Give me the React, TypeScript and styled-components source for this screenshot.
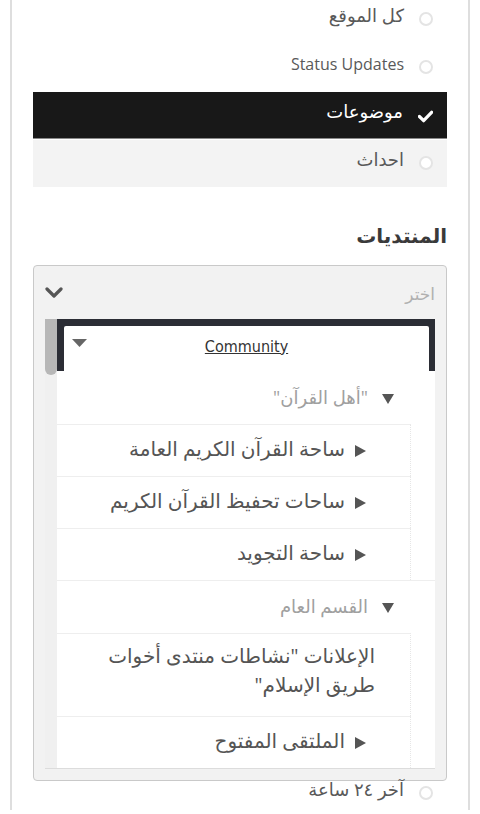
import React from 'react';
import styled, { createGlobalStyle } from 'styled-components';

const GlobalStyle = createGlobalStyle`
  html, body {
    margin: 0;
    padding: 0;
    background: #fff;
    overflow: hidden;
  }
  body {
    font-family: 'Open Sans', 'DejaVu Sans', sans-serif;
    color: #444;
  }
`;

const Page = styled.div`
  padding: 0 10px;
  height: 814px;
  overflow: hidden;
`;

const Card = styled.div`
  direction: rtl;
  width: 460px;
  box-sizing: border-box;
  border-left: 2px solid #dedede;
  border-right: 2px solid #dedede;
  padding: 0 21px;
  min-height: 814px;
`;

const OptionList = styled.ul`
  list-style: none;
  margin: -4px 0 0;
  padding: 0;
`;

const Option = styled.li<{ active?: boolean; hover?: boolean; short?: boolean }>`
  display: flex;
  align-items: center;
  gap: 15px;
  height: ${(p) => (p.short ? '32px' : '46px')};
  padding-right: 14px;
  margin-bottom: 1px;
  border-bottom: 1px solid ${(p) => (p.active ? '#8a8a8a' : 'transparent')};
  background: ${(p) => (p.active ? '#181818' : p.hover ? '#f3f3f3' : 'transparent')};
  color: ${(p) => (p.active ? '#fff' : '#595959')};
`;

const OptionText = styled.span<{ latin?: boolean }>`
  font-size: ${(p) => (p.latin ? '16px' : '18px')};
  margin-top: ${(p) => (p.latin ? '-6px' : '-8px')};
`;

const Radio = styled.span`
  width: 14px;
  height: 14px;
  box-sizing: border-box;
  border: 2px solid #e4e4e4;
  border-radius: 50%;
  background: #fff;
  flex: none;
`;

const CheckBox = styled.span`
  width: 15px;
  height: 14px;
  flex: none;
  display: flex;
  align-items: center;
  justify-content: center;
  margin-top: 2px;
`;

const Heading = styled.h3`
  margin: 34px 0 14px;
  font-size: 20px;
  line-height: 30px;
  font-weight: bold;
  color: #3a3a3a;
`;

const SelectBox = styled.div`
  border: 1px solid #c9c9c9;
  border-radius: 4px;
  background: #f2f2f2;
  padding: 0 11px 11px;
`;

const SelectHead = styled.div`
  display: flex;
  align-items: center;
  justify-content: space-between;
  height: 53px;
`;

const Placeholder = styled.span`
  color: #b0b0b0;
  font-size: 17px;
  margin-top: 2px;
`;

const Chevron = styled.span`
  display: flex;
`;

const Dropdown = styled.div`
  display: flex;
  height: 449px;
  overflow: hidden;
  border-bottom: 1px solid #dcdcdc;
`;

const Results = styled.div`
  flex: 1;
  background: #fff;
`;

const ScrollTrack = styled.div`
  width: 12px;
  background: #f0f0f0;
  flex: none;
`;

const ScrollThumb = styled.div`
  width: 12px;
  height: 56px;
  border-radius: 0 0 6px 6px;
  background: #b7b7b7;
`;

const Focused = styled.div`
  background: #2b2d35;
  padding: 7px 6px 0 7px;
`;

const FocusedInner = styled.div`
  display: flex;
  align-items: center;
  justify-content: center;
  position: relative;
  height: 45px;
  background: #fff;
  border-radius: 2px 2px 0 0;
`;

const Community = styled.a`
  direction: ltr;
  color: #333;
  font-size: 16px;
  text-decoration: underline;
  font-family: 'DejaVu Sans Condensed', 'DejaVu Sans', sans-serif;
  margin-top: -5px;
`;

const CaretDown = styled.span`
  position: absolute;
  left: 8px;
  top: 13px;
  display: flex;
`;

const GroupRow = styled.div<{ lined?: boolean }>`
  display: flex;
  align-items: center;
  gap: 14px;
  height: 52px;
  padding-right: 41px;
  border-top: 1px solid ${(p) => (p.lined ? '#eee' : 'transparent')};
  color: #a0a0a0;
  font-size: 18px;
  span {
    margin-top: -3px;
  }
`;

const Item = styled.div<{ plain?: boolean }>`
  display: flex;
  align-items: center;
  gap: 10px;
  min-height: 52px;
  box-sizing: border-box;
  margin-right: 24px;
  padding: ${(p) => (p.plain ? '11px 35px 17px 20px' : '0 44px 0 20px')};
  border-top: 1px solid #eee;
  border-right: 1px dotted #e6e6e6;
  color: #555;
  font-size: 20px;
  line-height: 29px;
  span {
    margin-top: -4px;
  }
`;

const Tri = ({ dir }: { dir: 'down' | 'left' }) =>
  dir === 'down' ? (
    <svg width="12" height="11" viewBox="0 0 12 11">
      <polygon points="0,1 12,1 6,11" fill="#555" />
    </svg>
  ) : (
    <svg width="11" height="12" viewBox="0 0 11 12">
      <polygon points="0,0 0,12 11,6" fill="#555" />
    </svg>
  );

const options = ['كل الموقع', 'Status Updates', 'موضوعات', 'احداث'];

const App = () => (
  <>
    <GlobalStyle />
    <Page>
      <Card>
        <OptionList>
          {options.map((o, i) => (
            <Option key={o} active={i === 2} hover={i === 3}>
              {i === 2 ? (
                <CheckBox>
                  <svg width="16" height="13" viewBox="0 0 16 13">
                    <path d="M1.5 6.5 L6 11 L14.5 2" stroke="#fff" strokeWidth="3.4" fill="none" strokeLinecap="round" strokeLinejoin="round" />
                  </svg>
                </CheckBox>
              ) : (
                <Radio />
              )}
              <OptionText latin={i === 1}>{o}</OptionText>
            </Option>
          ))}
        </OptionList>

        <Heading>المنتديات</Heading>

        <SelectBox>
          <SelectHead>
            <Placeholder>اختر</Placeholder>
            <Chevron>
              <svg width="18" height="11" viewBox="0 0 18 11">
                <polyline points="2,2 9,9 16,2" stroke="#555" strokeWidth="3.2" fill="none" strokeLinecap="round" strokeLinejoin="round" />
              </svg>
            </Chevron>
          </SelectHead>
          <Dropdown>
            <Results>
              <Focused>
                <FocusedInner>
                  <Community href="#">Community</Community>
                  <CaretDown>
                    <svg width="15" height="8" viewBox="0 0 15 8">
                      <polygon points="0,0 15,0 7.5,8" fill="#666" />
                    </svg>
                  </CaretDown>
                </FocusedInner>
              </Focused>
              <GroupRow>
                <Tri dir="down" />
                <span>"أهل القرآن"</span>
              </GroupRow>
              <Item>
                <Tri dir="left" />
                <span>ساحة القرآن الكريم العامة</span>
              </Item>
              <Item>
                <Tri dir="left" />
                <span>ساحات تحفيظ القرآن الكريم</span>
              </Item>
              <Item>
                <Tri dir="left" />
                <span>ساحة التجويد</span>
              </Item>
              <GroupRow lined>
                <Tri dir="down" />
                <span>القسم العام</span>
              </GroupRow>
              <Item plain>
                <span>الإعلانات "نشاطات منتدى أخوات طريق الإسلام"</span>
              </Item>
              <Item>
                <Tri dir="left" />
                <span>الملتقى المفتوح</span>
              </Item>
            </Results>
            <ScrollTrack>
              <ScrollThumb />
            </ScrollTrack>
          </Dropdown>
        </SelectBox>

        <OptionList>
          <Option short>
            <Radio />
            <OptionText>آخر ٢٤ ساعة</OptionText>
          </Option>
        </OptionList>
      </Card>
    </Page>
  </>
);

export default App;
